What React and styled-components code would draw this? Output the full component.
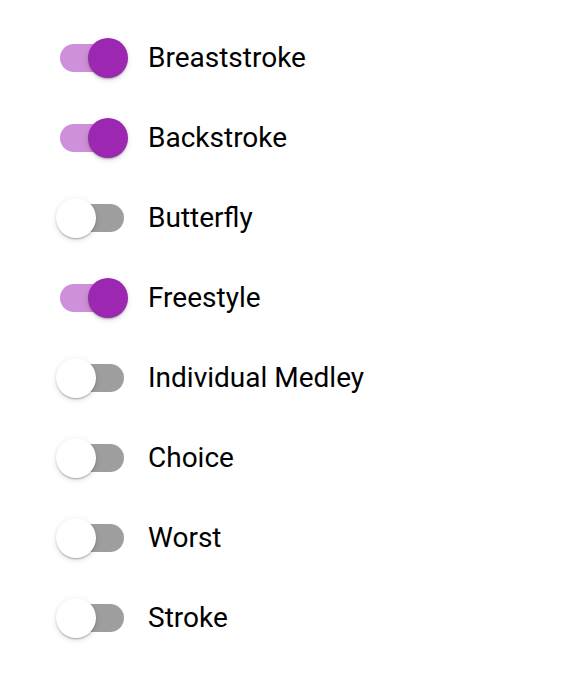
import React from "react";
import styled, { createGlobalStyle } from "styled-components";

const Global = createGlobalStyle`
  html, body { margin: 0; padding: 0; background: #fff; }
  body { font-family: Roboto, "Noto Sans", sans-serif; }
`;

const List = styled.div`
  display: flex;
  flex-direction: column;
  padding: 18px 0 0 56px;
`;

const Row = styled.label`
  display: flex;
  align-items: center;
  height: 80px;
  cursor: pointer;
`;

const SwitchBase = styled.span`
  position: relative;
  display: inline-flex;
  align-items: center;
  width: 72px;
  height: 40px;
  flex-shrink: 0;
  margin-right: 20px;
`;

const Track = styled.span`
  margin-left: 4px;
  width: 64px;
  height: 28px;
  border-radius: 14px;
  background: ${(p) => (p.$on ? "#ce90d9" : "#9e9e9e")};
`;

const Thumb = styled.span`
  position: absolute;
  top: 0;
  left: ${(p) => (p.$on ? "32px" : "0")};
  width: 40px;
  height: 40px;
  border-radius: 50%;
  background: ${(p) => (p.$on ? "#9c27b0" : "#fff")};
  box-shadow: 0 2px 2px -1px rgba(0,0,0,0.2), 0 1px 2px 0 rgba(0,0,0,0.14), 0 2px 6px 0 rgba(0,0,0,0.12);
`;

const Text = styled.span`
  font-size: 28px;
  line-height: 1.2;
  color: #000;
`;

const items = [
  ["Breaststroke", true],
  ["Backstroke", true],
  ["Butterfly", false],
  ["Freestyle", true],
  ["Individual Medley", false],
  ["Choice", false],
  ["Worst", false],
  ["Stroke", false],
];

export default function App() {
  return (
    <>
      <Global />
      <List>
        {items.map(([name, on]) => (
          <Row key={name}>
            <SwitchBase>
              <Track $on={on} />
              <Thumb $on={on} />
            </SwitchBase>
            <Text>{name}</Text>
          </Row>
        ))}
      </List>
    </>
  );
}
